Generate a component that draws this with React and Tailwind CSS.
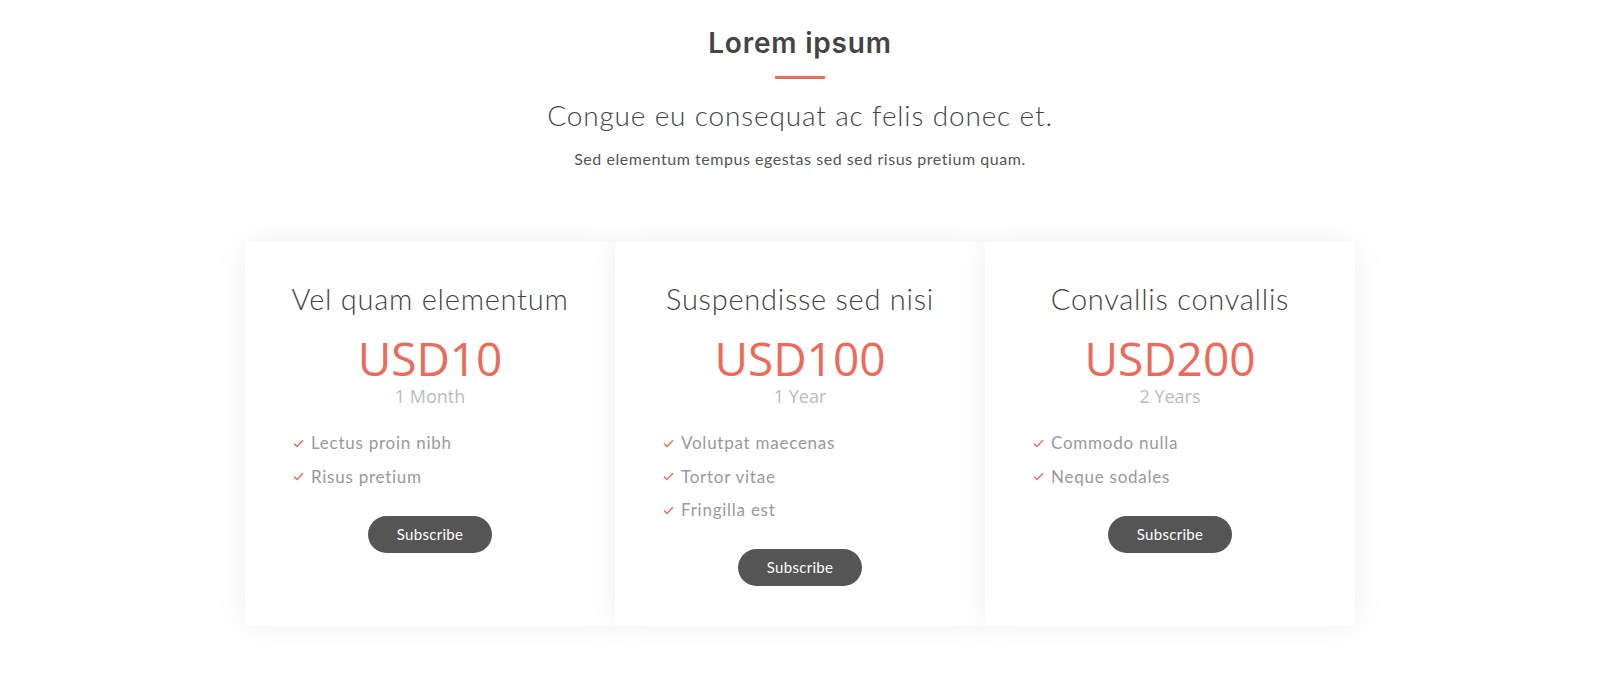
import React from 'react';

const plans = [
  { title: 'Vel quam elementum', price: 'USD10', period: '1 Month', features: ['Lectus proin nibh', 'Risus pretium'] },
  { title: 'Suspendisse sed nisi', price: 'USD100', period: '1 Year', features: ['Volutpat maecenas', 'Tortor vitae', 'Fringilla est'] },
  { title: 'Convallis convallis', price: 'USD200', period: '2 Years', features: ['Commodo nulla', 'Neque sodales'] },
];

const body = { fontFamily: '"Lato", "Noto Sans", sans-serif' };
const price = { fontFamily: '"Open Sans", sans-serif' };

function Tick() {
  return (
    <svg width="11" height="9" viewBox="0 0 11 9" className="shrink-0">
      <path d="M1 4.6 L3.9 7.4 L10 1.2" fill="none" stroke="#ec6a5a" strokeWidth="1.4" />
    </svg>
  );
}

export default function App() {
  return (
    <div className="min-h-screen bg-white pt-[24px] text-center" style={body}>
      {/* header */}
      <h2 className="text-[28px] leading-[38px] font-semibold tracking-[0.8px] text-[#444]" style={{ fontFamily: '"Inter", sans-serif' }}>Lorem ipsum</h2>
      <div className="mx-auto mt-[14px] h-[3px] w-[50px] bg-[#ec6a5a]" />
      <p className="mt-[18px] text-[28px] leading-[36px] font-light tracking-[0.85px] text-[#444]">Congue eu consequat ac felis donec et.</p>
      <p className="mt-[14px] text-[16px] leading-[24px] tracking-[0.55px] text-[#555]">Sed elementum tempus egestas sed sed risus pretium quam.</p>

      {/* cards */}
      <div className="mx-auto mt-[71px] grid w-[1110px] grid-cols-3">
        {plans.map(p => (
          <div key={p.title} className="bg-white pt-[39px] pb-[40px] shadow-[0_0_30px_rgba(0,0,0,0.07)]">
            <h3 className="text-[29px] leading-[36px] font-light tracking-[0.75px] text-[#444]">{p.title}</h3>
            <div className="mt-[15px] text-[46px] leading-[52px] text-[#ec6a5a]" style={price}>{p.price}</div>
            <div className="text-[18px] leading-[24px] text-[#bbb]" style={price}>{p.period}</div>
            <ul className="mt-[23px] flex flex-col gap-[9.5px] pl-[48px] text-left">
              {p.features.map(f => (
                <li key={f} className="flex items-center gap-[7px] text-[17px] leading-[24px] tracking-[0.75px] text-[#999]">
                  <Tick /> {f}
                </li>
              ))}
            </ul>
            <button className="mt-[27px] h-[37px] w-[124px] rounded-full bg-[#555] text-[15px] tracking-[0.3px] text-white">Subscribe</button>
          </div>
        ))}
      </div>
    </div>
  );
}
